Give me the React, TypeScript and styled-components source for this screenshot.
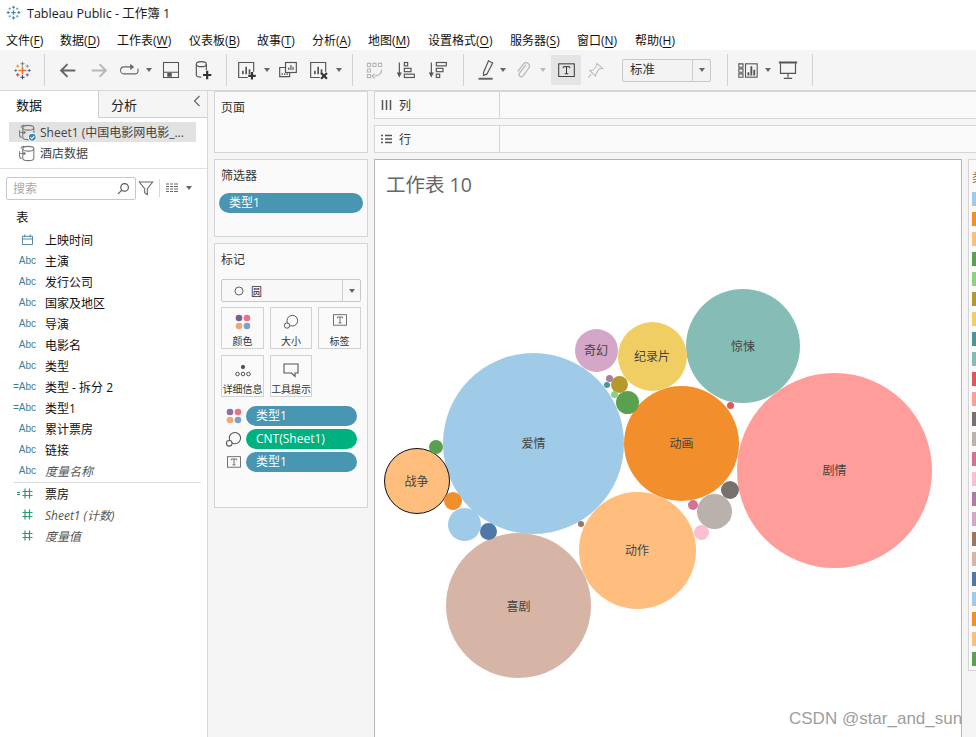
import styled, { createGlobalStyle } from 'styled-components';
import type { ReactNode } from 'react';

const GlobalStyle = createGlobalStyle`
  html, body {
    margin: 0;
    padding: 0;
    background: #fff;
    overflow: hidden;
  }
  * { box-sizing: border-box; }
  body {
    font-family: "Open Sans", "Noto Sans CJK SC", sans-serif;
    font-size: 12px;
    color: #222;
  }
`;

const Page = styled.div`
  position: relative;
  width: 976px;
  height: 737px;
  display: flex;
  flex-direction: column;
  overflow: hidden;
`;
const TitleBar = styled.div`
  height: 24px;
  display: flex;
  align-items: center;
  gap: 6px;
  padding-left: 6px;
  font-size: 12.5px;
  color: #1a1a1a;
`;
const MenuBar = styled.div`
  height: 26px;
  display: flex;
  align-items: center;
  padding: 6px 0 0 6px;
  font-size: 12px;
  color: #111;
`;
const MenuItem = styled.span<{ $w: number }>`
  width: ${(p) => p.$w}px;
  white-space: nowrap;
  u { text-underline-offset: 2px; }
`;
const Toolbar = styled.div`
  height: 41px;
  flex: none;
  display: flex;
  background: #f5f5f5;
  border-bottom: 1px solid #d6d6d6;
`;
const ToolGroup = styled.div<{ $l?: number; $r?: number }>`
  display: flex;
  align-items: center;
  padding: 0 ${(p) => p.$r ?? 0}px 0 ${(p) => p.$l ?? 0}px;
  border-right: 1px solid #d2d2d2;
  margin: 4px 0;
`;
const Tool = styled.div<{ $w: number; $on?: boolean }>`
  width: ${(p) => p.$w}px;
  height: 30px;
  flex: none;
  display: flex;
  align-items: center;
  justify-content: center;
  background: ${(p) => (p.$on ? '#e4e4e4' : 'transparent')};
  margin-left: ${(p) => (p.$on ? 5 : 0)}px;
`;
const Caret = styled.span<{ $color?: string }>`
  width: 0;
  height: 0;
  border-left: 3.5px solid transparent;
  border-right: 3.5px solid transparent;
  border-top: 4px solid ${(p) => p.$color ?? '#666'};
`;
const SizeSelect = styled.div`
  width: 89px;
  height: 23px;
  margin-left: 13px;
  display: flex;
  border: 1px solid #c8c8c8;
  border-radius: 2px;
  background: #f3f3f3;
  font-size: 12.5px;
  color: #333;
`;
const SelectText = styled.div`
  flex: 1;
  padding-left: 7px;
  line-height: 20px;
`;
const SelectArrow = styled.div`
  width: 18px;
  display: flex;
  align-items: center;
  justify-content: center;
  border-left: 1px solid #d0d0d0;
`;

const Main = styled.div`
  flex: 1;
  display: flex;
  background: #f5f5f5;
  min-height: 0;
`;
const DataPane = styled.div`
  width: 208px;
  flex: none;
  background: #fff;
  border-right: 1px solid #d8d8d8;
`;
const Tabs = styled.div`
  height: 27px;
  display: flex;
  font-size: 13px;
`;
const DataTab = styled.div`
  width: 99px;
  padding: 4px 0 0 16px;
  border-right: 1px solid #d0d0d0;
  color: #111;
`;
const AnalysisTab = styled.div`
  flex: 1;
  display: flex;
  justify-content: space-between;
  padding: 4px 6px 0 12px;
  background: #f5f5f5;
  border-bottom: 1px solid #d0d0d0;
  color: #222;
`;
const SourceList = styled.div`
  padding: 4px 11px 0 9px;
  height: 51px;
  border-bottom: 1px solid #e0e0e0;
`;
const Source = styled.div<{ $active?: boolean }>`
  height: 20px;
  margin-bottom: 1px;
  display: flex;
  align-items: center;
  gap: 3px;
  padding-left: 9px;
  background: ${(p) => (p.$active ? '#e2e2e2' : 'transparent')};
  color: #444;
  font-size: 12px;
  white-space: nowrap;
  overflow: hidden;
`;
const SearchRow = styled.div`
  height: 22px;
  margin: 8px 0 0 6px;
  display: flex;
  align-items: center;
`;
const SearchBox = styled.div`
  width: 130px;
  height: 23px;
  margin-right: 2px;
  display: flex;
  align-items: center;
  justify-content: space-between;
  padding: 0 5px 0 6px;
  border: 1px solid #c8c8c8;
  border-radius: 2px;
  color: #aaa;
`;
const SearchDivider = styled.div`
  width: 1px;
  height: 18px;
  margin: 0 6px 0 5px;
  background: #d8d8d8;
`;
const ListCaret = styled(Caret)`
  margin-left: 8px;
`;
const TableHead = styled.div`
  margin: 10px 0 2px 16px;
  height: 18px;
  line-height: 18px;
  font-size: 12.5px;
  color: #111;
`;
const FieldRow = styled.div<{ $italic?: boolean }>`
  height: 21px;
  display: flex;
  align-items: center;
  font-size: 12px;
  color: ${(p) => (p.$italic ? '#555' : '#111')};
  font-style: ${(p) => (p.$italic ? 'italic' : 'normal')};
`;
const FieldType = styled.div<{ $color?: string }>`
  width: 36px;
  flex: none;
  display: flex;
  align-items: center;
  justify-content: flex-end;
  font-size: 10px;
  font-style: normal;
  font-family: "Liberation Sans", sans-serif;
  color: ${(p) => p.$color ?? '#3f7d9c'};
  svg { margin-right: 3px; }
`;
const FieldName = styled.div`
  margin-left: 9px;
  white-space: nowrap;
`;
const FieldDivider = styled.div`
  height: 1px;
  margin: 1px 6px 0 13px;
  background: #dedede;
`;

const ShelfColumn = styled.div`
  width: 154px;
  flex: none;
  margin: 0 6px;
  display: flex;
  flex-direction: column;
  gap: 6px;
`;
const Card = styled.div<{ $h: number }>`
  height: ${(p) => p.$h}px;
  background: #fafafa;
  border: 1px solid #d4d4d4;
  padding: 6px 4px 0 6px;
  color: #333;
  font-size: 12px;
`;
const Pill = styled.div<{ $bg?: string }>`
  height: 20px;
  border-radius: 10px;
  background: ${(p) => p.$bg ?? '#4996b2'};
  color: #fff;
  padding-left: 10px;
  line-height: 19px;
  font-size: 12px;
  white-space: nowrap;
`;
const FilterPill = styled(Pill)`
  margin: 9px 0 0 -2px;
`;
const MarkSelect = styled.div`
  height: 23px;
  margin: 11px 2px 0 0;
  display: flex;
  border: 1px solid #c8c8c8;
  border-radius: 2px;
  background: #f8f8f8;
  font-size: 11px;
`;
const MarkSelectText = styled.div`
  flex: 1;
  display: flex;
  align-items: center;
  gap: 7px;
  padding-left: 12px;
`;
const MarkGrid = styled.div`
  margin-top: 5px;
  display: grid;
  grid-template-columns: 43px 42px 43px;
  gap: 6px;
`;
const MarkButton = styled.div`
  height: 42px;
  border: 1px solid #d2d2d2;
  display: flex;
  flex-direction: column;
  align-items: center;
  justify-content: space-between;
  padding: 6px 0 1px;
  font-size: 10px;
  line-height: 12px;
  color: #333;
  white-space: nowrap;
  letter-spacing: -0.1px;
`;
const PillList = styled.div`
  margin-top: 9px;
  display: flex;
  flex-direction: column;
  gap: 3px;
`;
const PillRow = styled.div`
  display: flex;
  align-items: center;
`;
const PillIcon = styled.div`
  width: 25px;
  flex: none;
  display: flex;
  justify-content: center;
`;
const WidePill = styled(Pill)`
  width: 111px;
`;

const Workspace = styled.div`
  width: 588px;
  flex: none;
  display: flex;
  flex-direction: column;
  gap: 6px;
`;
const ShelfBar = styled.div`
  width: 610px;
  height: 28px;
  display: flex;
  background: #fafafa;
  border: 1px solid #d6d6d6;
`;
const ShelfLabel = styled.div`
  width: 125px;
  display: flex;
  align-items: center;
  gap: 7px;
  padding-left: 6px;
  border-right: 1px solid #d6d6d6;
  color: #333;
`;
const View = styled.div`
  position: relative;
  flex: 1;
  background: #fff;
  border: 1px solid #b4b4b4;
  border-bottom: 0;
`;
const SheetTitle = styled.div`
  padding: 9px 0 0 11px;
  font-size: 19.5px;
  color: #666;
`;
const Bubble = styled.div<{ $stroke?: boolean }>`
  position: absolute;
  border-radius: 50%;
  display: flex;
  align-items: center;
  justify-content: center;
  font-size: 12px;
  color: #444;
  border: ${(p) => (p.$stroke ? '1px solid #111' : '0')};
`;
const Legend = styled.div`
  flex: none;
  width: 40px;
  height: 512px;
  margin: 68px 0 0 6px;
  background: #fafafa;
  border: 1px solid #d4d4d4;
  padding: 8px 0 0 3px;
`;
const LegendTitle = styled.div`
  height: 24px;
  font-size: 12px;
  color: #8a6a4a;
  white-space: nowrap;
`;
const Swatch = styled.div<{ $color: string }>`
  height: 14px;
  margin-bottom: 6px;
  background: ${(p) => p.$color};
`;
const Watermark = styled.div`
  position: absolute;
  left: 789px;
  top: 709px;
  font-family: "Liberation Sans", sans-serif;
  font-size: 17px;
  white-space: nowrap;
  color: rgba(130, 130, 130, 0.8);
`;

const Svg = ({ s = 22, children }: { s?: number; children: ReactNode }) => (
  <svg width={s} height={s} viewBox="0 0 24 24" fill="none" stroke="#555" strokeWidth="1.4">
    {children}
  </svg>
);

const Plus = ({ x, y, c, r = 3.5, w = 1.6 }: { x: number; y: number; c: string; r?: number; w?: number }) => (
  <path d={`M${x - r} ${y}H${x + r}M${x} ${y - r}V${y + r}`} stroke={c} strokeWidth={w} fill="none" />
);

const TableauLogo = () => (
  <svg width="19" height="19" viewBox="0 0 24 24">
    <Plus x={12} y={12} c="#e8762d" r={5} w={2} />
    <Plus x={12} y={3.5} c="#5b879b" r={2.5} w={1.3} />
    <Plus x={12} y={20.5} c="#1f447b" r={2.5} w={1.3} />
    <Plus x={3.5} y={12} c="#59879b" r={2} w={1.2} />
    <Plus x={20.5} y={12} c="#5b6591" r={2} w={1.2} />
    <Plus x={6} y={6.5} c="#eb912b" r={2} w={1.2} />
    <Plus x={18} y={6.5} c="#7099a6" r={2} w={1.2} />
    <Plus x={6} y={17.5} c="#c72035" r={2} w={1.2} />
    <Plus x={18} y={17.5} c="#5b6591" r={2} w={1.2} />
  </svg>
);

const WindowLogo = () => (
  <svg width="15" height="15" viewBox="0 0 24 24">
    <Plus x={12} y={12} c="#3e8bb8" r={3.5} w={2} />
    <Plus x={12} y={3.5} c="#3e8bb8" r={2.5} w={1.8} />
    <Plus x={12} y={20.5} c="#3e8bb8" r={2.5} w={1.8} />
    <Plus x={3.5} y={12} c="#3e8bb8" r={2.5} w={1.8} />
    <Plus x={20.5} y={12} c="#3e8bb8" r={2.5} w={1.8} />
    <Plus x={6} y={6} c="#6aa8cc" r={2} w={1.6} />
    <Plus x={18} y={6} c="#6aa8cc" r={2} w={1.6} />
    <Plus x={6} y={18} c="#6aa8cc" r={2} w={1.6} />
    <Plus x={18} y={18} c="#6aa8cc" r={2} w={1.6} />
  </svg>
);

const BackIcon = () => (
  <svg width="17" height="17" viewBox="0 0 24 24" fill="none" stroke="#666" strokeWidth="2.8">
    <path d="M23 12H3M12 3l-9 9 9 9" />
  </svg>
);
const ForwardIcon = () => (
  <svg width="17" height="17" viewBox="0 0 24 24" fill="none" stroke="#b8b8b8" strokeWidth="2.8">
    <path d="M1 12h20M12 3l9 9-9 9" />
  </svg>
);
const LoopIcon = () => (
  <svg width="19" height="14" viewBox="0 0 24 18" fill="none" stroke="#666" strokeWidth="1.4">
    <path d="M15 5H5a4 4 0 0 0 0 9h14a4 4 0 0 0 4-4V7" />
    <path d="M13 1l5 4-5 4z" fill="#666" stroke="none" />
  </svg>
);
const SaveIcon = () => (
  <Svg s={18}>
    <rect x="2" y="2" width="20" height="20" />
    <path d="M2 15h20" />
    <rect x="7" y="16" width="6" height="5" fill="#555" stroke="none" />
  </Svg>
);
const DbPlusIcon = () => (
  <Svg s={20}>
    <ellipse cx="10" cy="5" rx="6" ry="3" />
    <path d="M4 5v13c0 1.400 2.500 2.500 6 2.500M16 5v7" />
    <Plus x={17} y={18} c="#333" r={5} w={2.6} />
  </Svg>
);
const ChartBars = () => <path d="M7 17v-4M11 17V8M15 17v-6" strokeWidth="2" />;
const AddSheetIcon = () => (
  <Svg s={20}>
    <path d="M13 21H2V3h18v11" />
    <ChartBars />
    <Plus x={18} y={19} c="#333" r={4.500} w={2.600} />
  </Svg>
);
const DupIcon = () => (
  <Svg s={20}>
    <rect x="9" y="3" width="13" height="12" />
    <path d="M13 12V9M15.500 12V6M18 12V8" />
    <path d="M9 9H2v11h12v-5" />
    <path d="M5 18v-2M8 18v-2M11 18v-2" />
  </Svg>
);
const ClearIcon = () => (
  <Svg s={20}>
    <path d="M13 21H2V3h18v11" />
    <ChartBars />
    <path d="M14.500 15.500l7 7M21.500 15.500l-7 7" stroke="#333" strokeWidth="2.600" />
  </Svg>
);
const SwapIcon = () => (
  <svg width="19" height="19" viewBox="0 0 24 24" fill="none" stroke="#b4b4b4" strokeWidth="1.3">
    <path d="M3 3h4v4H3zM10 3h4v4h-4zM17 3h4v4h-4zM3 10h4v4H3zM3 17h4v4H3z" />
    <path d="M21 11c0 5-4 8-9 8M12 16l-3 3 3 3" strokeWidth="1.600" />
  </svg>
);
const SortAscIcon = () => (
  <Svg s={20}>
    <path d="M4 3v16" />
    <path d="M1 15l3 6 3-6z" fill="#555" stroke="none" />
    <rect x="10" y="3" width="4" height="4" />
    <rect x="10" y="10" width="8" height="4" />
    <rect x="10" y="17" width="12" height="4" />
  </Svg>
);
const SortDescIcon = () => (
  <Svg s={20}>
    <path d="M4 3v16" />
    <path d="M1 15l3 6 3-6z" fill="#555" stroke="none" />
    <rect x="10" y="3" width="12" height="4" />
    <rect x="10" y="10" width="8" height="4" />
    <rect x="10" y="17" width="4" height="4" />
  </Svg>
);
const PencilIcon = () => (
  <Svg s={20}>
    <path d="M9 15L15 1l5 2.500L13 17l-4 1.500z" />
    <path d="M3 22.500h17" strokeWidth="2.400" stroke="#666" />
  </Svg>
);
const ClipIcon = () => (
  <svg width="18" height="18" viewBox="0 0 24 24" fill="none" stroke="#bdbdbd" strokeWidth="1.800">
    <path d="M16 5L7.500 16a3 3 0 0 0 4.500 4l8-11a4.500 4.500 0 0 0-7-5.500L5 14" />
  </svg>
);
const TextBoxIcon = ({ s = 20, c = '#333' }: { s?: number; c?: string }) => (
  <svg width={s} height={s * 0.85} viewBox="0 0 24 20" fill="none" stroke={c} strokeWidth="1.400">
    <rect x="1" y="1" width="22" height="18" />
    <path d="M7.500 7V5h9v2M12 5v10M9.500 15h5" />
  </svg>
);
const PinIcon = () => (
  <svg width="17" height="17" viewBox="0 0 24 24" fill="none" stroke="#bdbdbd" strokeWidth="1.500">
    <path d="M14 2l8 7-5 1-4 6-1 4-8-8 5-1 4-5z" />
    <path d="M6 17l-4 5" />
  </svg>
);
const ShowMeIcon = () => (
  <svg width="20" height="15" viewBox="0 0 24 18" fill="none" stroke="#555" strokeWidth="1.300">
    <path d="M1 1h5v4H1zM1 7h5v4H1zM1 13h5v4H1z" />
    <rect x="9" y="1" width="14" height="16" />
    <path d="M12.500 15v-4M16 15V4M19.500 15V8" strokeWidth="2.200" />
  </svg>
);
const PresentIcon = () => (
  <Svg s={20}>
    <path d="M1 3h22" strokeWidth="2.400" />
    <path d="M3 4v12h18V4M12 16v5M7 22h10" />
  </Svg>
);

const DbIcon = ({ badge }: { badge?: boolean }) => (
  <svg width="19" height="19" viewBox="0 0 24 24" fill="none" stroke="#777" strokeWidth="1.300">
    <path d="M4 6c0-2 1-3 4-3" />
    <ellipse cx="13" cy="6" rx="7" ry="3" />
    <path d="M6 6v12c0 1.600 3 3 7 3s7-1.400 7-3V6" />
    <path d="M2 9v6c0 2 1 3 3 3M3 12h6l-2-2M7 14l2-2" />
    {badge && <circle cx="18" cy="18" r="5" fill="#3d87ad" stroke="#fff" />}
    {badge && <path d="M15.500 18l2 2 3-3.500" stroke="#fff" />}
  </svg>
);
const FilterIcon = () => (
  <svg width="16" height="16" viewBox="0 0 24 24" fill="none" stroke="#666" strokeWidth="1.600">
    <path d="M2 3h20l-8 10v9l-4-3v-6z" />
  </svg>
);
const ListIcon = () => (
  <svg width="12" height="10" viewBox="0 0 12 10" stroke="#666" strokeWidth="1">
    <path d="M0 1h12M0 3.500h12M0 6h12M0 8.500h12" />
    <path d="M3.500 0v10M7.500 0v10" stroke="#fff" />
  </svg>
);
const SearchIcon = () => (
  <svg width="13" height="13" viewBox="0 0 24 24" fill="none" stroke="#555" strokeWidth="2.200">
    <circle cx="14" cy="10" r="7" />
    <path d="M9 15l-7 7" />
  </svg>
);
const CalendarIcon = () => (
  <svg width="11" height="11" viewBox="0 0 12 12" fill="none" stroke="#3f7d9c" strokeWidth="1">
    <path d="M.5 2.500h11v9H.500zM3 .5v3M9 .5v3M.5 5.500h11" />
  </svg>
);
const HashIcon = ({ calc }: { calc?: boolean }) => (
  <svg width={calc ? 16 : 11} height="11" viewBox={calc ? '0 0 16 11' : '5 0 11 11'} fill="none" stroke="#2f9a76" strokeWidth="1.200">
    {calc && <path d="M0 4.500h3M0 6.500h3" />}
    <path d="M8 .5v10M12.500.5v10M5.500 3.500h10M5.500 7.500h10" />
  </svg>
);

const ColorDots = ({ s = 16, muted }: { s?: number; muted?: boolean }) => (
  <svg width={s} height={s} viewBox="0 0 16 16">
    <circle cx="4" cy="4" r="3.300" fill={muted ? '#8f6f9d' : '#7b5d8f'} />
    <circle cx="12" cy="4" r="3.300" fill="#ef6f85" />
    <circle cx="4" cy="12" r="3.300" fill="#f2a678" />
    <circle cx="12" cy="12" r="3.300" fill="#7f9fc8" />
  </svg>
);
const SizeIcon = ({ s = 16 }: { s?: number }) => (
  <svg width={s} height={s} viewBox="0 0 18 18" fill="none" stroke="#555" strokeWidth="1.100">
    <circle cx="10.500" cy="7.500" r="6" />
    <circle cx="4.500" cy="13" r="3" fill="#fafafa" />
  </svg>
);
const DetailIcon = () => (
  <svg width="16" height="16" viewBox="0 0 16 16" fill="none" stroke="#555" strokeWidth="1">
    <circle cx="8" cy="5" r="1.700" fill="#555" />
    <circle cx="2.500" cy="12" r="1.800" />
    <circle cx="8" cy="12" r="1.800" />
    <circle cx="13.500" cy="12" r="1.800" />
  </svg>
);
const TooltipIcon = () => (
  <svg width="16" height="16" viewBox="0 0 16 16" fill="none" stroke="#555" strokeWidth="1.100">
    <path d="M1 2h14v9h-3v3.500L8.500 11H1z" />
  </svg>
);

const menus: [string, string, number][] = [
  ['文件', 'F', 54],
  ['数据', 'D', 57],
  ['工作表', 'W', 72],
  ['仪表板', 'B', 68],
  ['故事', 'T', 55],
  ['分析', 'A', 56],
  ['地图', 'M', 60],
  ['设置格式', 'O', 82],
  ['服务器', 'S', 67],
  ['窗口', 'N', 58],
  ['帮助', 'H', 50],
];

type Field = { name: string; type?: string; italic?: boolean };
const dimensions: Field[] = [
  { name: '上映时间', type: 'date' },
  { name: '主演' },
  { name: '发行公司' },
  { name: '国家及地区' },
  { name: '导演' },
  { name: '电影名' },
  { name: '类型' },
  { name: '类型 - 拆分 2', type: 'calc' },
  { name: '类型1', type: 'calc' },
  { name: '累计票房' },
  { name: '链接' },
  { name: '度量名称', italic: true },
];
const measures: Field[] = [
  { name: '票房', type: 'calcnum' },
  { name: 'Sheet1 (计数)', type: 'num', italic: true },
  { name: '度量值', type: 'num', italic: true },
];

const renderType = (t?: string) => {
  if (t === 'date') return <CalendarIcon />;
  if (t === 'calc') return '=Abc';
  if (t === 'calcnum') return <HashIcon calc />;
  if (t === 'num') return <HashIcon />;
  return 'Abc';
};

// cx, cy, r in page coordinates, as read off the picture
const bubbles: { cx: number; cy: number; r: number; c: string; label?: string; stroke?: boolean }[] = [
  { cx: 834.5, cy: 470, r: 97.5, c: '#ff9d9a', label: '剧情' },
  { cx: 533.5, cy: 443, r: 90.5, c: '#a0cbe8', label: '爱情' },
  { cx: 518.5, cy: 605.5, r: 72.5, c: '#d7b5a6', label: '喜剧' },
  { cx: 681.5, cy: 443, r: 57.5, c: '#f28e2b', label: '动画' },
  { cx: 637, cy: 550, r: 58.5, c: '#ffbe7d', label: '动作' },
  { cx: 743, cy: 346, r: 57, c: '#86bcb6', label: '惊悚' },
  { cx: 652, cy: 356, r: 34.5, c: '#f1ce63', label: '纪录片' },
  { cx: 596, cy: 350, r: 21.5, c: '#d4a6c8', label: '奇幻' },
  { cx: 416.5, cy: 481, r: 33, c: '#ffbe7d', label: '战争', stroke: true },
  { cx: 619, cy: 384, r: 8.5, c: '#b6992d' },
  { cx: 627, cy: 402, r: 11.5, c: '#59a14f' },
  { cx: 609, cy: 378, r: 3.5, c: '#b07aa1' },
  { cx: 607, cy: 385, r: 3, c: '#499894' },
  { cx: 614, cy: 394, r: 3.5, c: '#8cd17d' },
  { cx: 436, cy: 447, r: 7, c: '#59a14f' },
  { cx: 453, cy: 501, r: 9, c: '#f28e2b' },
  { cx: 464, cy: 524, r: 16.5, c: '#a0cbe8' },
  { cx: 488, cy: 531, r: 8.5, c: '#4e79a7' },
  { cx: 730, cy: 490, r: 9, c: '#79706e' },
  { cx: 714, cy: 511, r: 17.5, c: '#bab0ac' },
  { cx: 693, cy: 505, r: 5, c: '#d37295' },
  { cx: 701, cy: 532, r: 7.5, c: '#fabfd2' },
  { cx: 730, cy: 405, r: 3.5, c: '#e15759' },
  { cx: 581, cy: 524, r: 3, c: '#9d7660' },
];

const legendColors = [
  '#a0cbe8', '#f28e2b', '#ffbe7d', '#59a14f', '#8cd17d', '#b6992d', '#f1ce63', '#499894',
  '#86bcb6', '#e15759', '#ff9d9a', '#79706e', '#bab0ac', '#d37295', '#fabfd2', '#b07aa1',
  '#d4a6c8', '#9d7660', '#d7b5a6', '#4e79a7', '#a0cbe8', '#f28e2b', '#ffbe7d', '#59a14f',
];

export default function App() {
  return (
    <Page>
      <GlobalStyle />
      <TitleBar>
        <WindowLogo />
        <span>Tableau Public - 工作簿 1</span>
      </TitleBar>
      <MenuBar>
        {menus.map(([name, key, w]) => (
          <MenuItem key={name} $w={w}>
            {name}(<u>{key}</u>)
          </MenuItem>
        ))}
      </MenuBar>
      <Toolbar>
        <ToolGroup>
          <Tool $w={44}><TableauLogo /></Tool>
        </ToolGroup>
        <ToolGroup $l={6} $r={7}>
          <Tool $w={32}><BackIcon /></Tool>
          <Tool $w={32}><ForwardIcon /></Tool>
          <Tool $w={28}><LoopIcon /></Tool>
          <Tool $w={12}><Caret /></Tool>
          <Tool $w={32}><SaveIcon /></Tool>
          <Tool $w={32}><DbPlusIcon /></Tool>
        </ToolGroup>
        <ToolGroup $l={4} $r={7}>
          <Tool $w={32}><AddSheetIcon /></Tool>
          <Tool $w={8}><Caret /></Tool>
          <Tool $w={34}><DupIcon /></Tool>
          <Tool $w={28}><ClearIcon /></Tool>
          <Tool $w={12}><Caret /></Tool>
        </ToolGroup>
        <ToolGroup $l={5} $r={9}>
          <Tool $w={32}><SwapIcon /></Tool>
          <Tool $w={32}><SortAscIcon /></Tool>
          <Tool $w={32}><SortDescIcon /></Tool>
        </ToolGroup>
        <ToolGroup $l={8} $r={16}>
          <Tool $w={28}><PencilIcon /></Tool>
          <Tool $w={6}><Caret /></Tool>
          <Tool $w={34}><ClipIcon /></Tool>
          <Tool $w={6}><Caret $color="#bbb" /></Tool>
          <Tool $w={30} $on><TextBoxIcon s={17} /></Tool>
          <Tool $w={28}><PinIcon /></Tool>
          <SizeSelect>
            <SelectText>标准</SelectText>
            <SelectArrow><Caret /></SelectArrow>
          </SizeSelect>
        </ToolGroup>
        <ToolGroup $l={2} $r={6}>
          <Tool $w={36}><ShowMeIcon /></Tool>
          <Tool $w={4}><Caret /></Tool>
          <Tool $w={36}><PresentIcon /></Tool>
        </ToolGroup>
      </Toolbar>
      <Main>
        <DataPane>
          <Tabs>
            <DataTab>数据</DataTab>
            <AnalysisTab>
              <span>分析</span>
              <svg width="8" height="12" viewBox="0 0 8 12" fill="none" stroke="#666" strokeWidth="1.200">
                <path d="M6.500 1L1.500 6l5 5" />
              </svg>
            </AnalysisTab>
          </Tabs>
          <SourceList>
            <Source $active>
              <DbIcon badge />
              <span>Sheet1 (中国电影网电影_...</span>
            </Source>
            <Source>
              <DbIcon />
              <span>酒店数据</span>
            </Source>
          </SourceList>
          <SearchRow>
            <SearchBox>
              <span>搜索</span>
              <SearchIcon />
            </SearchBox>
            <FilterIcon />
            <SearchDivider />
            <ListIcon />
            <ListCaret />
          </SearchRow>
          <TableHead>表</TableHead>
          {dimensions.map((f) => (
            <FieldRow key={f.name} $italic={f.italic}>
              <FieldType>{renderType(f.type)}</FieldType>
              <FieldName>{f.name}</FieldName>
            </FieldRow>
          ))}
          <FieldDivider />
          {measures.map((f) => (
            <FieldRow key={f.name} $italic={f.italic}>
              <FieldType $color="#3f9a7c">{renderType(f.type)}</FieldType>
              <FieldName>{f.name}</FieldName>
            </FieldRow>
          ))}
        </DataPane>
        <ShelfColumn>
          <Card $h={62}>页面</Card>
          <Card $h={78}>
            筛选器
            <FilterPill>类型1</FilterPill>
          </Card>
          <Card $h={265}>
            标记
            <MarkSelect>
              <MarkSelectText>
                <svg width="10" height="10" viewBox="0 0 10 10" fill="none" stroke="#666">
                  <circle cx="5" cy="5" r="4" />
                </svg>
                <span>圆</span>
              </MarkSelectText>
              <SelectArrow><Caret /></SelectArrow>
            </MarkSelect>
            <MarkGrid>
              <MarkButton><ColorDots />颜色</MarkButton>
              <MarkButton><SizeIcon />大小</MarkButton>
              <MarkButton><TextBoxIcon s={14} c="#555" />标签</MarkButton>
              <MarkButton><DetailIcon />详细信息</MarkButton>
              <MarkButton><TooltipIcon />工具提示</MarkButton>
            </MarkGrid>
            <PillList>
              <PillRow>
                <PillIcon><ColorDots muted /></PillIcon>
                <WidePill>类型1</WidePill>
              </PillRow>
              <PillRow>
                <PillIcon><SizeIcon s={17} /></PillIcon>
                <WidePill $bg="#00b180">CNT(Sheet1)</WidePill>
              </PillRow>
              <PillRow>
                <PillIcon><TextBoxIcon s={14} c="#555" /></PillIcon>
                <WidePill>类型1</WidePill>
              </PillRow>
            </PillList>
          </Card>
        </ShelfColumn>
        <Workspace>
          <ShelfBar>
            <ShelfLabel>
              <svg width="11" height="10" viewBox="0 0 11 10" stroke="#555" strokeWidth="1.500">
                <path d="M1.500 0v10M5.500 0v10M9.500 0v10" />
              </svg>
              列
            </ShelfLabel>
          </ShelfBar>
          <ShelfBar>
            <ShelfLabel>
              <svg width="11" height="10" viewBox="0 0 11 10" stroke="#555" strokeWidth="1.500">
                <path d="M0 1.500h2M4 1.500h7M0 5h2M4 5h7M0 8.500h2M4 8.500h7" />
              </svg>
              行
            </ShelfLabel>
          </ShelfBar>
          <View>
            <SheetTitle>工作表 10</SheetTitle>
            {bubbles.map((b) => (
              <Bubble
                key={`${b.cx}-${b.cy}`}
                $stroke={b.stroke}
                style={{
                  left: b.cx - b.r - 375,
                  top: b.cy - b.r - 160,
                  width: b.r * 2,
                  height: b.r * 2,
                  background: b.c,
                }}
              >
                {b.label}
              </Bubble>
            ))}
          </View>
        </Workspace>
        <Legend>
          <LegendTitle>类型1</LegendTitle>
          {legendColors.map((c, i) => (
            <Swatch key={i} $color={c} />
          ))}
        </Legend>
      </Main>
      <Watermark>CSDN @star_and_sun</Watermark>
    </Page>
  );
}
